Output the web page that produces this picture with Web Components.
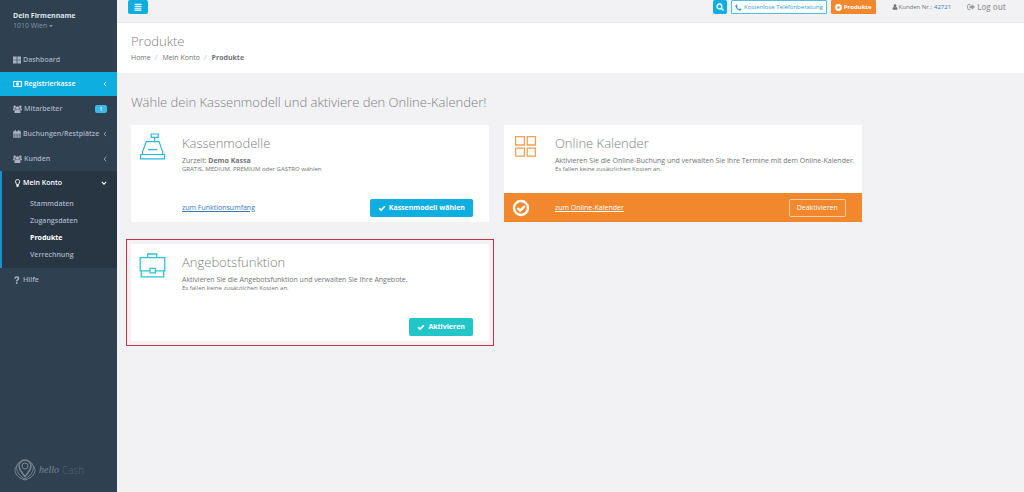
<!DOCTYPE html>
<html lang="de">
<head>
<meta charset="utf-8">
<meta name="viewport" content="width=device-width, initial-scale=1">
<title>Produkte – helloCash</title>
<style>
  :root {
    --blue: #0eaee0; --orange: #f2882d; --teal: #23c6c8; --navy: #2f4050; --navy-dark: #283644;
    --page: #f2f2f4; --line: #e7e8ea; --text: #707375; --head: #7d8082; --link: #3878b5;
  }
  body { margin: 0; background: var(--page); color: var(--text); font: 7px/10px "Open Sans", "Noto Sans", sans-serif; }
</style>
</head>
<body>
<app-shell>
  <app-sidebar slot="side" company="Dein Firmenname" place="1010 Wien">
    <nav-item icon="tiles" label="Dashboard"></nav-item>
    <nav-item icon="money" label="Registrierkasse" chevron highlight></nav-item>
    <nav-item icon="users" label="Mitarbeiter" badge="1"></nav-item>
    <nav-item icon="calendar" label="Buchungen/Restplätze" chevron></nav-item>
    <nav-item icon="users" label="Kunden" chevron></nav-item>
    <nav-item icon="bulb" label="Mein Konto" chevron open>
      <sub-item label="Stammdaten"></sub-item>
      <sub-item label="Zugangsdaten"></sub-item>
      <sub-item label="Produkte" active></sub-item>
      <sub-item label="Verrechnung"></sub-item>
    </nav-item>
    <nav-item icon="question" label="Hilfe"></nav-item>
  </app-sidebar>
  <top-bar></top-bar>
  <page-heading></page-heading>
  <product-grid heading="Wähle dein Kassenmodell und aktiviere den Online-Kalender!">
    <product-card icon="register" heading="Kassenmodelle" link="zum Funktionsumfang">
      <span>Zurzeit: <b>Demo Kassa</b></span>
      <span slot="note">GRATIS, MEDIUM, PREMIUM oder GASTRO wählen</span>
      <app-button slot="action" tone="blue" icon="check">Kassenmodell wählen</app-button>
    </product-card>
    <product-card icon="squares" heading="Online Kalender" link="zum Online-Kalender" enabled>
      <span>Aktivieren Sie die Online-Buchung und verwalten Sie Ihre Termine mit dem Online-Kalender.</span>
      <span slot="note">Es fallen keine zusätzlichen Kosten an.</span>
      <app-button slot="action" tone="ghost">Deaktivieren</app-button>
    </product-card>
    <product-card icon="briefcase" heading="Angebotsfunktion" marked>
      <span>Aktivieren Sie die Angebotsfunktion und verwalten Sie Ihre Angebote.</span>
      <span slot="note">Es fallen keine zusätzlichen Kosten an.</span>
      <app-button slot="action" tone="teal" icon="check">Aktivieren</app-button>
    </product-card>
  </product-grid>
</app-shell>

<script>
const ICONS = {
  tiles: ['0 0 14 14', '<path fill="currentColor" d="M0 1h6.4v5.4H0zM7.6 1H14v5.4H7.6zM0 7.6h6.4V13H0zM7.6 7.6H14V13H7.6z"/>'],
  money: ['0 0 16 14', '<path fill="none" stroke="currentColor" stroke-width="1.7" d="M1 2.5h14v9H1z"/><ellipse cx="8" cy="7" rx="2.6" ry="3.2" fill="currentColor"/><path fill="currentColor" d="M1 2h3L1 5zM15 2h-3l3 3zM1 12h3L1 9zM15 12h-3l3-3z"/>'],
  users: ['0 0 16 14', '<g fill="currentColor"><circle cx="8" cy="5" r="3"/><circle cx="3" cy="3" r="2.300"/><circle cx="13" cy="3" r="2.300"/><path d="M3.5 14c-1 0-1-1-.9-2.200C3 9 4.500 8 6 8h4c1.500 0 3 1 3.400 3.800.1 1.200.1 2.200-.9 2.200zM0 8.500C0 6.500.5 5.500 2 5.500h2.500L5 7.300C3.800 7.500 3 8 2.500 9.500H1C.4 9.500 0 9 0 8.500zM16 8.500c0-2-.5-3-2-3h-2.500L11 7.300c1.200.2 2 .7 2.500 2.200H15c.6 0 1-.5 1-1z"/></g>'],
  calendar: ['0 0 14 14', '<path fill="none" stroke="currentColor" stroke-width="1.2" d="M1 3h12v10.400H1zM1 6h12M1 8.500h12M1 11h12M4 6v7M7 6v7M10 6v7"/><path fill="currentColor" d="M.5 2.500h13V6H.5zM3 0h2v4H3zM9 0h2v4H9z"/>'],
  bulb: ['0 0 14 14', '<path fill="none" stroke="currentColor" stroke-width="1.700" d="M6.400 10C6.300 7.800 4.300 7 4.300 4.500 4.300 2.300 6 1 8 1s3.700 1.300 3.700 3.500C11.700 7 9.700 7.800 9.600 10z"/><path fill="currentColor" d="M6 10h4v3L8 14l-2-1z"/>'],
  question: ['0 0 14 14', '<path fill="none" stroke="currentColor" stroke-width="2.600" d="M3 4.500C3.500 2.500 4.700 1.800 6.500 1.800c2 0 3.300 1 3.300 2.700C9.800 7 6.500 6.800 6.500 9.500"/><path fill="currentColor" d="M5.100 11h2.800v2.800H5.100z"/>'],
  left: ['0 0 8 14', '<path fill="none" stroke="currentColor" stroke-width="2" d="M6.500 2L2 7l4.500 5"/>'],
  down: ['0 0 14 14', '<path fill="none" stroke="currentColor" stroke-width="2.800" d="M2 4.500L7 9.500l5-5"/>'],
  bars: ['0 0 14 14', '<path fill="currentColor" d="M1 1.500h12v2H1zM1 4.800h12v2H1zM1 8.100h12v2H1zM1 11.400h12v2H1z"/>'],
  search: ['0 0 14 14', '<g fill="none" stroke="currentColor" stroke-width="2.400"><circle cx="6" cy="6" r="4.200"/><path d="M9 9l4.200 4.200"/></g>'],
  phone: ['0 0 14 14', '<path fill="currentColor" d="M3.500 1c.6 0 1.700 2.400 1.700 3 0 .7-1.400 1.300-1.300 2 .2 1.200 2.600 3.800 4.100 4.100.7.100 1.300-1.300 2-1.300.6 0 3 1.200 3 1.700 0 1.500-1.500 2.500-3 2.500C6.500 13 1 7.500 1 4c0-1.500 1-3 2.500-3z"/>'],
  badge: ['0 0 14 14', '<path fill="currentColor" fill-rule="evenodd" d="M7 .2a6.800 6.800 0 1 1 0 13.600a6.800 6.800 0 0 1 0-13.600zM7 4.500a2.500 2.500 0 1 0 0 5a2.500 2.500 0 0 0 0-5z"/>'],
  user: ['0 0 14 14', '<path fill="currentColor" d="M7 .5a3.300 3.300 0 1 1 0 6.800a3.300 3.300 0 0 1 0-6.800zM1.500 13.500C1 9.500 2.300 7.500 4.300 7.200c1.600 1.400 3.800 1.400 5.400 0 2 .3 3.300 2.300 2.800 6.300z"/>'],
  logout: ['0 0 14 14', '<path fill="none" stroke="currentColor" stroke-width="1.600" d="M6 2.500H3.500C2 2.500 1 3.300 1 5v4c0 1.700 1 2.500 2.500 2.500H6"/><path fill="currentColor" d="M4.500 5h4V2L14 7l-5.500 5V9h-4z"/>'],
  check: ['0 0 14 14', '<path fill="none" stroke="currentColor" stroke-width="2.800" d="M2 7.500l3.500 3.200L12 4"/>'],
  checkCircle: ['0 0 18 18', '<g fill="none" stroke="currentColor"><circle cx="9" cy="9" r="7" stroke-width="2.400"/><path stroke-width="2.400" d="M5.400 9l2.700 2.700L12.800 7"/></g>'],
  register: ['0 0 27 27', '<g fill="none" stroke="#2ab8df" stroke-width="1.200"><path d="M1.600 21.500h24v4.400h-24zM3.500 21.500v-2.700L7.300 8.600h5.900M18 8.600h2l3.700 10.200v2.700M9 16.700h9.300M15.600 4.600v4"/><path d="M13.200 8.600h4.800"/><path d="M12.200 1h7v3.400h-7z"/></g>'],
  squares: ['0 0 27 27', '<path fill="none" stroke="#f0a05a" stroke-width="1.300" d="M3.600 3.600h8.800v8.400H3.600zM15.200 3.600h8.200v8.400h-8.200zM3.600 15.200h8.800v8H3.600zM15.200 15.200h8.200v8h-8.200z"/>'],
  briefcase: ['0 0 27 27', '<g fill="none" stroke="#2cc5ca" stroke-width="1.300"><path d="M11 18.800H1.200V5.700h24.600v13.100h-9.400M2.300 18.800v6h22.400v-6M11 16.300h5.400v4.600H11zM8.700 5.700V2h9v3.700"/></g>'],
  logo: ['0 0 22 24', '<g fill="none" stroke="#7b8792" stroke-width="1"><path stroke-width="1.500" d="M11 18.500C7 13.800 5 11 5 8a6 6 0 0 1 12 0c0 3-2 5.800-6 10.500z"/><circle cx="11" cy="8" r="3"/><path d="M5.500 4C2.500 6 2 10 3.500 13.500c1.200 3 4 5.500 7.500 7.500 3.500-2 6.300-4.500 7.500-7.500C20 10 19.500 6 16.500 4M3 8c-2.400 1-2.600 5-.8 8 1.600 3 5.300 5 8.800 6 3.500-1 7.200-3 8.800-6 1.800-3 1.600-7-.8-8"/></g>']
};
const define = (tag, css, render) => customElements.define(tag, class extends HTMLElement {
  connectedCallback() {
    if (this.shadowRoot) return;
    const t = document.createElement('template');
    t.innerHTML = `<style>${css}</style>${render(this)}`;
    this.attachShadow({ mode: 'open' }).append(t.content.cloneNode(true));
  }
});
const at = (el, n) => el.getAttribute(n) || '';

define('ui-icon', `:host{display:inline-flex;flex:none;width:8px;height:8px} svg{width:100%;height:100%;display:block}`,
  el => { const [box, art] = ICONS[at(el, 'name')]; return `<svg viewBox="${box}" aria-hidden="true">${art}</svg>`; });

define('app-shell', `
  :host{display:grid;grid-template-columns:117px minmax(0,1fr);min-height:100vh}
  main{display:flex;flex-direction:column;min-width:0}`,
  () => `<slot name="side"></slot><main><slot></slot></main>`);

define('app-sidebar', `
  :host{display:flex;flex-direction:column;background:var(--navy);color:#a7b1c2}
  header{height:48px;box-sizing:border-box;padding:11px 13px 0}
  strong{display:block;color:#dfe4ed;font-weight:700}
  button{display:flex;align-items:center;gap:2px;border:0;background:none;padding:0;font:inherit;color:#8095a8}
  i{border:2px solid transparent;border-top-color:currentColor;border-bottom:0}
  footer{display:flex;align-items:center;gap:3px;margin-top:auto;padding:0 14px 10px;line-height:24px}
  footer ui-icon{width:22px;height:24px}
  em{font:italic 10px/24px "Liberation Serif",serif;color:#7b8792}
  footer span{font-size:10px;font-weight:300;color:#566674}`,
  el => `<header><strong>${at(el, 'company')}</strong><button type="button">${at(el, 'place')}<i></i></button></header>
  <nav><slot></slot></nav>
  <footer><ui-icon name="logo"></ui-icon><em>hello</em><span>Cash</span></footer>`);

define('nav-item', `
  :host{display:block;font-weight:600}
  a{display:flex;align-items:center;gap:2px;height:24px;padding:0 10px 0 13px;color:inherit;text-decoration:none;white-space:nowrap}
  :host([chevron]:not([highlight]):not([open])) a,:host([badge]) a{height:25px}
  :host([highlight]) a{background:var(--blue);color:#fff}
  :host([open]){background:var(--navy-dark);box-shadow:inset 2px 0 #1b93d1;padding-bottom:5px}
  :host([open]) a{color:#fff}
  ui-icon[name=users],ui-icon[name=money]{width:9px}
  .end{margin-left:auto}
  ui-icon.end{width:4px;height:6px}
  ui-icon.end[name=down]{width:6px}
  .badge{background:#3cb9e6;color:#fff;border-radius:2px;width:12px;font-size:5px;line-height:8px;text-align:center}`,
  el => `<a href="#"><ui-icon name="${at(el, 'icon')}"></ui-icon><span>${at(el, 'label')}</span>
  ${el.hasAttribute('chevron') ? `<ui-icon class="end" name="${el.hasAttribute('open') ? 'down' : 'left'}"></ui-icon>` : ''}
  ${at(el, 'badge') ? `<span class="end badge">${at(el, 'badge')}</span>` : ''}</a><slot></slot>`);

define('sub-item', `
  :host{display:block;color:#a7b1c2}
  :host([active]){color:#fff;font-weight:700}
  a{display:block;padding-left:30px;line-height:17px;color:inherit;text-decoration:none}`,
  el => `<a href="#">${at(el, 'label')}</a>`);

define('app-button', `
  :host{display:inline-flex}
  button{display:flex;align-items:center;justify-content:center;gap:2px;height:18px;padding:0 7px;border:1px solid transparent;border-radius:2px;font:inherit;color:#fff;white-space:nowrap}
  :host([tone=blue]) button{background:var(--blue);font-weight:700}
  :host([tone=teal]) button{background:var(--teal);font-weight:700}
  :host([tone=orange]) button{background:var(--orange);font-weight:700}
  :host([tone=ghost]) button{background:none;border-color:#f9cfa6}
  :host([tone=outline]) button{background:#fff;border-color:#4fbfdf;color:#2a9fcb}
  :host([icon=check]) button{padding:0 7px;gap:3px}
  :host([size]) button{height:14px}
  :host([size=small]) button{padding:0 3px;border-radius:1px;font-size:6px}
  :host([size=small]) ui-icon{width:7px;height:7px}
  :host([size=square]) button{padding:0 2px}
  :host([size=wide]) button{padding:0 5px}`,
  el => `<button type="button"${at(el, 'label') ? ` aria-label="${at(el, 'label')}"` : ''}>${at(el, 'icon') ? `<ui-icon name="${at(el, 'icon')}"></ui-icon>` : ''}<slot></slot></button>`);

define('top-bar', `
  :host{display:flex;align-items:flex-start;height:22px;padding:0 18px 0 11px;border-bottom:1px solid var(--line)}
  .right{display:flex;gap:4px;margin-left:auto;align-items:flex-start}
  a{color:inherit;text-decoration:none;display:flex;align-items:center;gap:2px;line-height:14px}
  .id{display:flex;align-items:center;gap:1px;font-size:6px;line-height:14px;margin:0 12px}
  .id ui-icon{width:6px;height:6px}
  .id a{color:var(--link);margin-left:1px}
  .out{font-size:8px;line-height:13px;font-weight:600;color:#999c9e}`,
  () => `<app-button tone="blue" size="wide" icon="bars" label="Menü"></app-button>
  <div class="right"><app-button tone="blue" size="square" icon="search" label="Suche"></app-button>
  <app-button tone="outline" size="small" icon="phone">Kostenlose Telefonberatung</app-button>
  <app-button tone="orange" size="small" icon="badge">Produkte</app-button>
  <span class="id"><ui-icon name="user"></ui-icon>Kunden Nr.: <a href="#">42721</a></span>
  <a class="out" href="#"><ui-icon name="logout"></ui-icon>Log out</a></div>`);

define('page-heading', `
  :host{display:block;background:#fff;padding:10px 14px;height:30px}
  h1{margin:0 0 3px;font-size:13px;line-height:16px;font-weight:300;color:var(--head)}
  ol{display:flex;margin:0;padding:0;list-style:none;line-height:12px}
  li+li::before{content:"/";padding:0 5px 0 4px;color:#c0c2c4;font-weight:400}
  li:last-child{font-weight:700}
  a{color:inherit;text-decoration:none}`,
  () => `<h1>Produkte</h1><ol><li><a href="#">Home</a></li><li><a href="#">Mein Konto</a></li><li>Produkte</li></ol>`);

define('product-grid', `
  :host{display:block;padding:19px 13px 19px 14px}
  h2{margin:0 0 13px;font-size:13px;line-height:20px;font-weight:300;color:var(--head)}
  div{display:grid;grid-template-columns:repeat(12,minmax(0,1fr));gap:22px 15px}
  ::slotted(*){grid-column:span 5}
  ::slotted(:nth-child(odd)){grid-column:1 / span 5}`,
  el => `<h2>${at(el, 'heading')}</h2><div><slot></slot></div>`);

define('product-card', `
  :host{display:block;background:#fff}
  :host([marked]){outline:1px solid #c9304a;outline-offset:4px}
  .top,.foot{display:grid;grid-template-columns:27px minmax(0,1fr) auto;column-gap:16px;padding:0 16px 0 8px}
  .top{grid-template-columns:27px minmax(0,1fr);padding:8px 0 0 8px;height:60px}
  .top ui-icon{width:27px;height:27px}
  h3{margin:0 0 3px;font-size:13px;line-height:20px;font-weight:300;color:var(--head)}
  p{margin:0;line-height:9px;white-space:nowrap}
  p+p{font-size:6px}
  .foot{height:29px;align-items:center;color:#fff}
  .foot ui-icon{display:flex;width:18px;height:18px}
  a{color:var(--link)}
  :host([enabled]) .foot{background:var(--orange)}
  :host([enabled]) a{color:#fff}`,
  el => `<div class="top"><ui-icon name="${at(el, 'icon')}"></ui-icon><div><h3>${at(el, 'heading')}</h3><p><slot></slot></p><p><slot name="note"></slot></p></div></div>
  <div class="foot"><span>${el.hasAttribute('enabled') ? '<ui-icon name="checkCircle"></ui-icon>' : ''}</span><span>${at(el, 'link') ? `<a href="#">${at(el, 'link')}</a>` : ''}</span><slot name="action"></slot></div>`);
</script>
</body>
</html>
